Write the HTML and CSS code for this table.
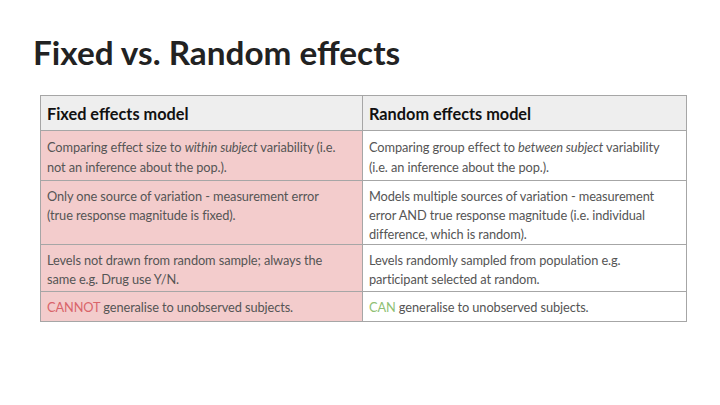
FILE: index.html
```html
<!DOCTYPE html>
<html>
<head>
<meta charset="utf-8">
<link rel="stylesheet" href="styles.css">
</head>
<body>
<div class="slide">
  <h1 class="title">Fixed vs. Random effects</h1>
  <table class="cmp">
    <thead>
      <tr>
        <th class="col-fixed">Fixed effects model</th>
        <th class="col-random">Random effects model</th>
      </tr>
    </thead>
    <tbody>
      <tr class="r1">
        <td class="fixed">Comparing effect size to <em>within subject</em> variability (i.e.<br>not an inference about the pop.).</td>
        <td class="random">Comparing group effect to <em>between subject</em> variability<br>(i.e. an inference about the pop.).</td>
      </tr>
      <tr class="r2">
        <td class="fixed">Only one source of variation - measurement error<br>(true response magnitude is fixed).</td>
        <td class="random">Models multiple sources of variation - measurement<br>error AND true response magnitude (i.e. individual<br>difference, which is random).</td>
      </tr>
      <tr class="r3">
        <td class="fixed">Levels not drawn from random sample; always the<br>same e.g. Drug use Y/N.</td>
        <td class="random">Levels randomly sampled from population e.g.<br>participant selected at random.</td>
      </tr>
      <tr class="r4">
        <td class="fixed"><span class="no">CANNOT</span> generalise to unobserved subjects.</td>
        <td class="random"><span class="yes">CAN</span> generalise to unobserved subjects.</td>
      </tr>
    </tbody>
  </table>
</div>
</body>
</html>
```
FILE: styles.css
```css
html, body {
  margin: 0;
  padding: 0;
  background: #ffffff;
}
.slide {
  width: 720px;
  height: 405px;
  padding: 32px 0 0 33px;
  box-sizing: border-box;
  font-family: Lato, "Noto Sans", sans-serif;
}
.title {
  margin: 0 0 23px 0;
  font-family: Lato, "Noto Sans", sans-serif;
  font-weight: 700;
  font-size: 33.3px;
  line-height: 40px;
  color: #222222;
  letter-spacing: 0;
}
.cmp {
  margin-left: 7px;
  width: 647px;
  border-collapse: collapse;
  font-family: Lato, "Noto Sans", sans-serif;
}
.cmp th, .cmp td {
  border: 1px solid #a6a6a6;
  text-align: left;
  vertical-align: top;
  white-space: nowrap;
}
.cmp th {
  background: #eeeeee;
  color: #111111;
  font-weight: 700;
  font-size: 16.3px;
  height: 35px;
  padding: 0 0 0 6px;
  box-sizing: border-box;
  vertical-align: middle;
}
.col-fixed { width: 322px; }
.cmp td {
  font-size: 12.8px;
  line-height: 19px;
  color: #555555;
  padding: 6px 6px 0 6px;
  letter-spacing: -0.1px;
  box-sizing: border-box;
}
.cmp td em {
  font-style: italic;
}
.cmp td.fixed { background: #f3cccc; }
.cmp td.random { background: #ffffff; }
.r1 td { height: 50px; line-height: 20px; }
.r2 td { height: 63px; }
.r3 td { height: 47px; }
.r4 td { height: 30px; }
.no { color: #d9646a; }
.yes { color: #8fbf74; }
```
